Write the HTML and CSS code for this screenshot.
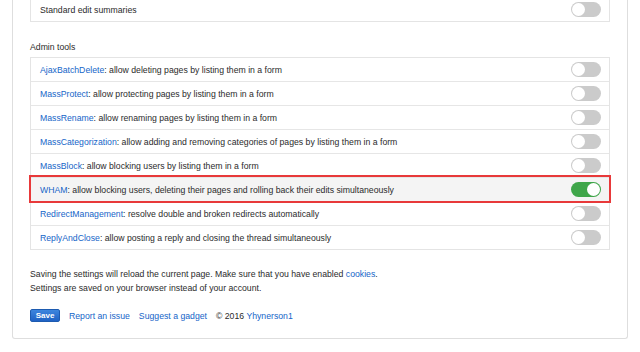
FILE: index.html
```html
<!DOCTYPE html>
<html>
<head>
<meta charset="utf-8">
<link rel="stylesheet" href="styles.css">
</head>
<body>
<div class="panel">
  <ul class="list">
    <li class="row"><span class="label">Standard edit summaries</span><span class="toggle"></span></li>
  </ul>
  <h3 class="heading">Admin tools</h3>
  <ul class="list">
    <li class="row"><span class="label"><a href="#">AjaxBatchDelete</a>: allow deleting pages by listing them in a form</span><span class="toggle"></span></li>
    <li class="row"><span class="label"><a href="#">MassProtect</a>: allow protecting pages by listing them in a form</span><span class="toggle"></span></li>
    <li class="row"><span class="label"><a href="#">MassRename</a>: allow renaming pages by listing them in a form</span><span class="toggle"></span></li>
    <li class="row"><span class="label"><a href="#">MassCategorization</a>: allow adding and removing categories of pages by listing them in a form</span><span class="toggle"></span></li>
    <li class="row"><span class="label"><a href="#">MassBlock</a>: allow blocking users by listing them in a form</span><span class="toggle"></span></li>
    <li class="row row-highlight"><span class="label"><a href="#">WHAM</a>: allow blocking users, deleting their pages and rolling back their edits simultaneously</span><span class="toggle toggle-on"></span></li>
    <li class="row"><span class="label"><a href="#">RedirectManagement</a>: resolve double and broken redirects automatically</span><span class="toggle"></span></li>
    <li class="row"><span class="label"><a href="#">ReplyAndClose</a>: allow posting a reply and closing the thread simultaneously</span><span class="toggle"></span></li>
  </ul>
  <p class="note">Saving the settings will reload the current page. Make sure that you have enabled <a href="#">cookies</a>.<br>Settings are saved on your browser instead of your account.</p>
  <div class="footer">
    <button class="save">Save</button>
    <a href="#">Report an issue</a>
    <a href="#">Suggest a gadget</a>
    <span>© 2016 <a href="#">Yhynerson1</a></span>
  </div>
</div>
</body>
</html>
```

FILE: styles.css
```css
html, body {
  margin: 0;
  padding: 0;
  background: #fff;
}
body {
  font-family: "Liberation Sans", Arial, sans-serif;
  font-size: 8.7px;
  color: #2b2b2b;
  overflow: hidden;
}
a {
  color: #1565c8;
  text-decoration: none;
}
.panel {
  margin: -4px 12px 0 12px;
  border: 1px solid #dedede;
  border-top: none;
  border-radius: 0 0 3px 3px;
  padding: 1px 17px 16px 17px;
}
.list {
  list-style: none;
  margin: 0;
  padding: 0;
  border: 1px solid #e4e4e4;
}
.row {
  display: flex;
  align-items: center;
  justify-content: space-between;
  height: 23px;
  padding: 0 8px 0 9px;
  background: #fff;
}
.row + .row {
  border-top: 1px solid #e6e6e6;
}
.row-highlight {
  background: #f4f4f4;
  outline: 2px solid #e8393a;
  outline-offset: 0;
  position: relative;
}
.label {
  white-space: nowrap;
}
.toggle {
  display: block;
  width: 30px;
  height: 15px;
  border-radius: 8px;
  background: #cbcbcb;
  position: relative;
}
.toggle::after {
  content: "";
  position: absolute;
  top: 1px;
  left: 1px;
  width: 13px;
  height: 13px;
  border-radius: 50%;
  background: #fff;
}
.toggle-on {
  background: #3fa64a;
}
.toggle-on::after {
  left: 16px;
}
.heading {
  font-size: 8.7px;
  font-weight: normal;
  line-height: 14px;
  margin: 18px 0 3px 0;
}
.note {
  line-height: 14px;
  margin: 17px 0 0 0;
}
.footer {
  display: flex;
  align-items: center;
  gap: 9px;
  margin-top: 14px;
  height: 13px;
}
.save {
  width: 30px;
  height: 13px;
  padding: 0;
  border: 1px solid #1d5bb0;
  border-radius: 2px;
  background: linear-gradient(#3d86de, #1f62c4);
  color: #fff;
  font-family: "Liberation Sans", Arial, sans-serif;
  font-size: 8px;
  font-weight: bold;
  line-height: 11px;
}
```
